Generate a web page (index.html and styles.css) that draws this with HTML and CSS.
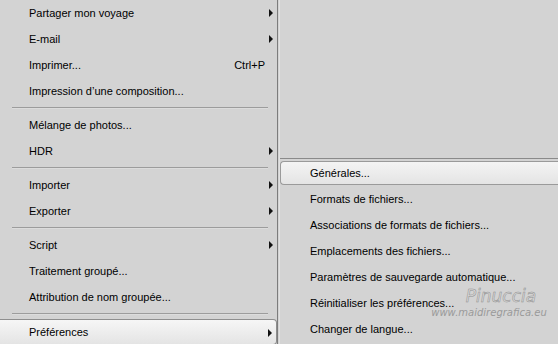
FILE: index.html
```html
<!DOCTYPE html>
<html lang="fr">
<head>
    <meta charset="UTF-8">
    <title>Préférences</title>
    <link rel="stylesheet" href="styles.css">
</head>
<body>
    <ul class="menu">
        <li class="item sub">Partager mon voyage</li>
        <li class="item sub">E-mail</li>
        <li class="item"><span>Imprimer...</span><span class="key">Ctrl+P</span></li>
        <li class="item">Impression d’une composition...</li>
        <li class="sep"></li>
        <li class="item">Mélange de photos...</li>
        <li class="item sub">HDR</li>
        <li class="sep"></li>
        <li class="item sub">Importer</li>
        <li class="item sub">Exporter</li>
        <li class="sep"></li>
        <li class="item sub">Script</li>
        <li class="item">Traitement groupé...</li>
        <li class="item">Attribution de nom groupée...</li>
        <li class="sep"></li>
        <li class="item sub active">Préférences</li>
    </ul>

    <div class="side">
        <div class="blank"></div>
        <ul class="submenu">
            <li class="item active">Générales...</li>
            <li class="item">Formats de fichiers...</li>
            <li class="item">Associations de formats de fichiers...</li>
            <li class="item">Emplacements des fichiers...</li>
            <li class="item">Paramètres de sauvegarde automatique...</li>
            <li class="item">Réinitialiser les préférences...</li>
            <li class="item">Changer de langue...</li>
        </ul>
    </div>

    <div class="mark">
        <div class="mark-name">Pinuccia</div>
        <div class="mark-url">www.maidiregrafica.eu</div>
    </div>
</body>
</html>
```

FILE: styles.css
```css
body {
    margin: 0;
    height: 344px;
    overflow: hidden;
    background: #d3d3d3;
    font-family: "Liberation Sans", Arial, sans-serif;
    font-size: 11px;
    color: #000;
    display: flex;
    position: relative;
}
ul {
    list-style: none;
    margin: 0;
    padding: 0;
}
.menu {
    width: 277px;
    border-right: 1px solid #7c7c7c;
    flex-shrink: 0;
}
.item {
    height: 26px;
    display: flex;
    align-items: center;
    justify-content: space-between;
    padding-left: 29px;
    padding-right: 12px;
    position: relative;
    box-sizing: border-box;
}
.menu .item.sub::after {
    content: "";
    position: absolute;
    right: 4px;
    top: 9px;
    border-left: 4px solid #111;
    border-top: 4px solid transparent;
    border-bottom: 4px solid transparent;
}
.sep {
    height: 8px;
    box-sizing: border-box;
    padding-top: 3px;
    margin: 0 9px 0 12px;
}
.sep::before {
    content: "";
    display: block;
    height: 1px;
    background: #9c9c9c;
    border-bottom: 1px solid #dcdcdc;
}
.menu .active {
    margin-top: 1px;
    height: 26px;
    border: 1px solid #8e8e8e;
    border-left: none;
    border-radius: 0 4px 4px 0;
    background: linear-gradient(#f6f6f6, #e4e4e4);
}
.side {
    flex: 1;
    margin-left: 1px;
    border-left: 1px solid #e2e2e2;
}
.blank {
    height: 158px;
}
.submenu {
    border-top: 1px solid #8a8a8a;
    padding-top: 2px;
}
.submenu .item {
    padding-left: 30px;
}
.submenu .active {
    height: 24px;
    margin-bottom: 1px;
    border: 1px solid #9a9a9a;
    border-right: none;
    border-radius: 4px 0 0 4px;
    background: linear-gradient(#f4f4f4, #e4e4e4);
    padding-left: 29px;
}
.mark {
    position: absolute;
    left: 430px;
    top: 286px;
    width: 118px;
    text-align: center;
    font-family: "DejaVu Sans", sans-serif;
    font-style: italic;
}
.mark-name {
    font-size: 17px;
    line-height: 21px;
    color: #dadada;
    -webkit-text-stroke: 0.5px #8e8e8e;
    padding-left: 24px;
    font-weight: 300;
}
.mark-url {
    font-size: 10px;
    line-height: 11px;
    color: #9a9a9a;
}
```
